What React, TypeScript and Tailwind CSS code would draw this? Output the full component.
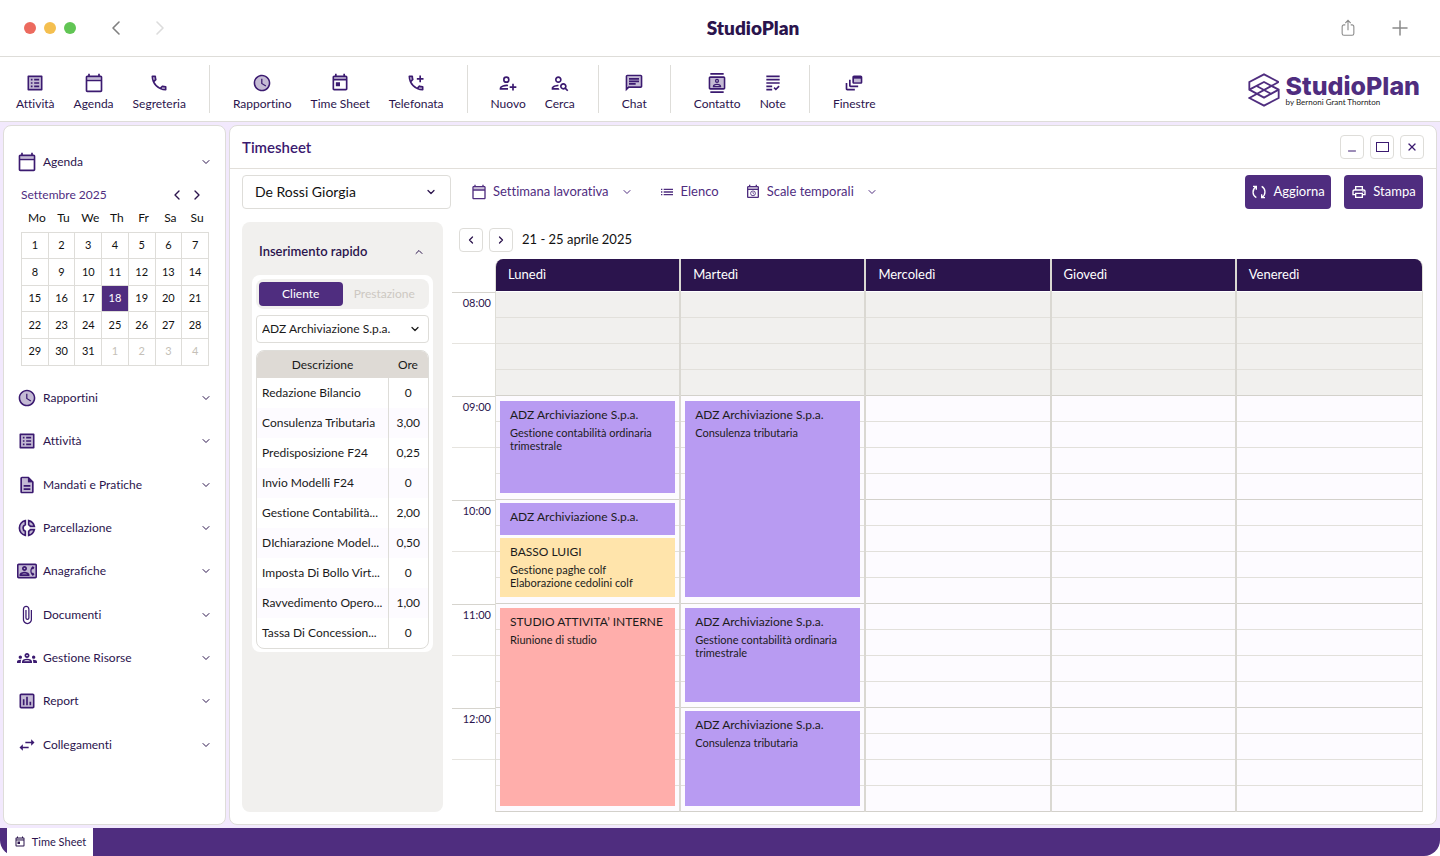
import React from 'react';
import { ChevronDown, ChevronLeft, ChevronRight, ChevronUp, Minus, Plus, X } from 'lucide-react';
import {
    MdAttachFile,
    MdGrading,
    MdList,
    MdListAlt,
    MdOutlineAddIcCall,
    MdOutlineCalendarToday,
    MdOutlineChat,
    MdOutlineContactPhone,
    MdOutlineContacts,
    MdOutlineDescription,
    MdOutlineDynamicFeed,
    MdOutlineGroups,
    MdOutlineInsertChart,
    MdOutlinePersonSearch,
    MdOutlinePhone,
    MdOutlinePrint,
    MdSchedule,
    MdSwapHoriz,
} from 'react-icons/md';

type IconProps = { className?: string };

// Wraps an outline icon and lays a translucent fill under it
const twoTone = (Icon: React.ElementType, tone: string): React.FC<IconProps> =>
    ({ className }) => (
        <svg viewBox="0 0 24 24" className={className} fill="currentColor" aria-hidden="true">
            <path d={tone} opacity="0.3" />
            <Icon width="24" height="24" size={24} />
        </svg>
    );

const TimeSheetIcon: React.FC<IconProps> = ({ className }) => (
    <svg viewBox="0 0 24 24" className={className} fill="currentColor" aria-hidden="true">
        <path d="M5 5h14v2H5z" opacity="0.3" />
        <path d="M19 3h-1V1h-2v2H8V1H6v2H5c-1.11 0-1.99.9-1.99 2L3 19c0 1.1.89 2 2 2h14c1.1 0 2-.9 2-2V5c0-1.1-.9-2-2-2zm0 16H5V9h14v10zm0-12H5V5h14v2zM7 11h5v5H7z" />
    </svg>
);

const TimeScaleIcon: React.FC<IconProps> = ({ className }) => (
    <svg viewBox="0 0 24 24" className={className} fill="currentColor" aria-hidden="true">
        <path d="M5 5h14v2H5z" opacity="0.3" />
        <path d="M19 3h-1V1h-2v2H8V1H6v2H5c-1.1 0-2 .9-2 2v14c0 1.1.9 2 2 2h14c1.1 0 2-.9 2-2V5c0-1.1-.9-2-2-2zm0 16H5V9h14v10zm0-12H5V5h14v2z" />
        <circle cx="12" cy="14" r="3.6" fill="none" stroke="currentColor" strokeWidth="1.3" />
        <path d="M12 12v2l1.4 1" fill="none" stroke="currentColor" strokeWidth="1.1" />
    </svg>
);

const PersonPlusIcon: React.FC<IconProps> = ({ className }) => (
    <svg viewBox="0 0 24 24" className={className} fill="none" stroke="currentColor" strokeWidth="2" aria-hidden="true">
        <circle cx="10" cy="8" r="3" />
        <path d="M12 15c-3.5-.5-9 1-9 3v1h9M18 13v8M14 17h8" />
    </svg>
);

const RefreshIcon: React.FC<IconProps> = ({ className }) => (
    <svg viewBox="0 0 24 24" className={className} fill="none" stroke="currentColor" strokeWidth="2" aria-hidden="true">
        <path d="M8 20.500C1.500 17 1.500 8 7.500 4M3 3.500h5v5" />
        <path d="M16 3.500C22.500 7 22.500 16 16.500 20M21 20.500h-5v-5" />
    </svg>
);

const DonutIcon: React.FC<IconProps> = ({ className }) => (
    <svg viewBox="0 0 24 24" className={className} fill="none" stroke="currentColor" strokeWidth="2" aria-hidden="true">
        <path d="M10 3.200a9 9 0 0 0 0 17.600v-4.800a4.300 4.300 0 0 1 0-8z" fill="currentColor" fillOpacity="0.3" />
        <path d="M14 3.200v4.800a4.300 4.300 0 0 1 2 2h4.800A9 9 0 0 0 14 3.200z" fill="currentColor" fillOpacity="0.3" />
        <path d="M14 20.800v-4.800a4.300 4.300 0 0 0 2-2h4.800A9 9 0 0 1 14 20.800z" fill="currentColor" fillOpacity="0.3" />
    </svg>
);

const ListAltIcon = twoTone(MdListAlt, 'M5 5h14v14H5z');
const AgendaIcon = twoTone(MdOutlineCalendarToday, 'M4 5h16v3H4z');
const PhoneIcon = twoTone(MdOutlinePhone, 'M5 5h2.500v4L6 9zM15 16h4v3h-2z');
const PhonePlusIcon = twoTone(MdOutlineAddIcCall, 'M5 5h2.500v4L6 9zM15 16h4v3h-2z');
const ClockIcon = twoTone(MdSchedule, 'M12 4a8 8 0 1 0 0 16 8 8 0 0 0 0-16z');
const ChatIcon = twoTone(MdOutlineChat, 'M4 4h16v12H4z');
const ContactsIcon = twoTone(MdOutlineContacts, 'M4 6h16v12H4z');
const WindowsIcon = twoTone(MdOutlineDynamicFeed, 'M12 7h8v4h-8z');
const DocIcon = twoTone(MdOutlineDescription, 'M6 4h7v5h5v11H6z');
const ContactPhoneIcon = twoTone(MdOutlineContactPhone, 'M2 5h20v14H2z');
const GroupsIcon = twoTone(MdOutlineGroups, 'M8 16h8v1H8z');
const ReportIcon = twoTone(MdOutlineInsertChart, 'M5 5h14v14H5z');

const toolbar = [
    [
        { label: 'Attività', icon: ListAltIcon },
        { label: 'Agenda', icon: AgendaIcon },
        { label: 'Segreteria', icon: PhoneIcon },
    ],
    [
        { label: 'Rapportino', icon: ClockIcon },
        { label: 'Time Sheet', icon: TimeSheetIcon },
        { label: 'Telefonata', icon: PhonePlusIcon },
    ],
    [
        { label: 'Nuovo', icon: PersonPlusIcon },
        { label: 'Cerca', icon: MdOutlinePersonSearch },
    ],
    [{ label: 'Chat', icon: ChatIcon }],
    [
        { label: 'Contatto', icon: ContactsIcon },
        { label: 'Note', icon: MdGrading },
    ],
    [{ label: 'Finestre', icon: WindowsIcon }],
];

const sections = [
    { label: 'Rapportini', icon: ClockIcon },
    { label: 'Attività', icon: ListAltIcon },
    { label: 'Mandati e Pratiche', icon: DocIcon },
    { label: 'Parcellazione', icon: DonutIcon },
    { label: 'Anagrafiche', icon: ContactPhoneIcon },
    { label: 'Documenti', icon: MdAttachFile },
    { label: 'Gestione Risorse', icon: GroupsIcon },
    { label: 'Report', icon: ReportIcon },
    { label: 'Collegamenti', icon: MdSwapHoriz },
];

const weekdays = ['Mo', 'Tu', 'We', 'Th', 'Fr', 'Sa', 'Su'];
const weeks = [
    [1, 2, 3, 4, 5, 6, 7],
    [8, 9, 10, 11, 12, 13, 14],
    [15, 16, 17, 18, 19, 20, 21],
    [22, 23, 24, 25, 26, 27, 28],
    [29, 30, 31, 1, 2, 3, 4],
];

const services = [
    ['Redazione Bilancio', '0'],
    ['Consulenza Tributaria', '3,00'],
    ['Predisposizione F24', '0,25'],
    ['Invio Modelli F24', '0'],
    ['Gestione Contabilità...', '2,00'],
    ['DIchiarazione Model...', '0,50'],
    ['Imposta Di Bollo Virt...', '0'],
    ['Ravvedimento Opero...', '1,00'],
    ['Tassa Di Concession...', '0'],
];

const hours = ['08:00', '09:00', '10:00', '11:00', '12:00'];

type CalendarEvent = { top: number; height: number; color: string; title: string; lines: string[] };

const purple = 'bg-[#b89bf2]';
const yellow = 'bg-[#ffe4ab]';
const red = 'bg-[#ffaeab]';

// top and height are in pixels: one hour is 104px
const days: { name: string; events: CalendarEvent[] }[] = [
    {
        name: 'Lunedì',
        events: [
            { top: 109, height: 92, color: purple, title: 'ADZ Archiviazione S.p.a.', lines: ['Gestione contabilità ordinaria', 'trimestrale'] },
            { top: 211, height: 32, color: purple, title: 'ADZ Archiviazione S.p.a.', lines: [] },
            { top: 246, height: 59, color: yellow, title: 'BASSO LUIGI', lines: ['Gestione paghe colf', 'Elaborazione cedolini colf'] },
            { top: 316, height: 198, color: red, title: 'STUDIO ATTIVITA’ INTERNE', lines: ['Riunione di studio'] },
        ],
    },
    {
        name: 'Martedì',
        events: [
            { top: 109, height: 196, color: purple, title: 'ADZ Archiviazione S.p.a.', lines: ['Consulenza tributaria'] },
            { top: 316, height: 94, color: purple, title: 'ADZ Archiviazione S.p.a.', lines: ['Gestione contabilità ordinaria', 'trimestrale'] },
            { top: 419, height: 95, color: purple, title: 'ADZ Archiviazione S.p.a.', lines: ['Consulenza tributaria'] },
        ],
    },
    { name: 'Mercoledì', events: [] },
    { name: 'Giovedì', events: [] },
    { name: 'Veneredì', events: [] },
];

const Logo: React.FC = () => (
    <div className="flex items-center gap-[6px] pt-[2px]">
        <svg viewBox="0 0 96 102" className="h-[34px] w-8" fill="none" stroke="#4f2d7f" strokeWidth="5.500" aria-hidden="true">
            <path d="M92 27 48 4 4 27v23l44 24 44-24" />
            <path d="M92 27 4 75l44 23 44-23V50L48 27 4 50" />
            <path d="M26 39 70 63" />
        </svg>
        <div>
            <div className="font-['Inter',sans-serif] text-[25px] leading-6 font-extrabold text-[#4f2d7f]">StudioPlan</div>
            <div className="text-[8px] leading-2 text-[#222]">by Bernoni Grant Thornton</div>
        </div>
    </div>
);

const TitleBar: React.FC = () => (
    <header className="grid h-[57px] grid-cols-[1fr_auto_1fr] items-center border-b border-[#deddd9] pr-7 pl-6">
        <div className="flex items-center gap-2">
            <span className="h-3 w-3 rounded-full bg-[#ec6a5e]" />
            <span className="h-3 w-3 rounded-full bg-[#f4bf4f]" />
            <span className="h-3 w-3 rounded-full bg-[#61c554]" />
            <button aria-label="Indietro" className="ml-5 text-[#808080]">
                <ChevronLeft className="h-6 w-6" strokeWidth={1.6} />
            </button>
            <button aria-label="Avanti" className="ml-3 text-[#dcdcdc]">
                <ChevronRight className="h-6 w-6" strokeWidth={1.6} />
            </button>
        </div>
        <h1 className="pl-[70px] text-[19px] font-extrabold text-[#2b144d]">StudioPlan</h1>
        <div className="flex items-center justify-end gap-8 text-[#8a8a8a]">
            <button aria-label="Condividi">
                <svg viewBox="0 0 16 20" className="h-[18px] w-4" fill="none" stroke="currentColor" strokeWidth="1.200">
                    <path d="M5 6.500H3.500a2 2 0 0 0-2 2V16a2 2 0 0 0 2 2h9a2 2 0 0 0 2-2V8.500a2 2 0 0 0-2-2H11M8 12.500V2M5 4.500 8 1.500l3 3" />
                </svg>
            </button>
            <button aria-label="Aggiungi">
                <Plus className="h-6 w-6" strokeWidth={1.5} />
            </button>
        </div>
    </header>
);

const Toolbar: React.FC = () => (
    <nav className="flex h-[65px] items-center border-b border-[#deddd9] pr-5">
        {toolbar.map((group, i) => (
            <div key={i} className="flex h-12 gap-[19px] border-r border-[#deddd9] px-[23px] first:pl-4 last-of-type:border-r-0">
                {group.map(({ label, icon: Icon }) => (
                    <button key={label} className="flex flex-col items-center justify-center gap-[3px] pt-[6px] text-xs leading-4 text-[#2b144d]">
                        <Icon className="h-5 w-5 text-[#3b1a70]" />
                        {label}
                    </button>
                ))}
            </div>
        ))}
        <a href="#" className="ml-auto">
            <Logo />
        </a>
    </nav>
);

const Sidebar: React.FC = () => (
    <aside className="w-[223px] shrink-0 rounded-lg border border-[#deddd9] bg-white text-xs text-[#2b144d]">
        <button className="mt-[26px] flex h-5 w-full items-center gap-[6px] px-[13px]">
            <AgendaIcon className="h-5 w-5 text-[#3b1a70]" />
            Agenda
            <ChevronDown className="ml-auto h-3 w-3" />
        </button>

        <div className="mt-[13px] flex h-5 items-center gap-1 pr-5 pl-[17px]">
            <span className="mr-auto text-[#4f2d7f]">Settembre 2025</span>
            <button aria-label="Mese precedente"><ChevronLeft className="h-4 w-4" /></button>
            <button aria-label="Mese successivo"><ChevronRight className="h-4 w-4" /></button>
        </div>

        <table className="ml-[17px] w-[188px] table-fixed border-collapse text-center text-[11px] text-[#111]">
            <thead>
                <tr className="h-[27px] text-xs">
                    {weekdays.map((d) => (
                        <th key={d} scope="col" className="p-0 pl-1 font-normal">{d}</th>
                    ))}
                </tr>
            </thead>
            <tbody className="h-[133px]">
                {weeks.map((week, w) => (
                    <tr key={w}>
                        {week.map((d) => (
                            <td
                                key={d}
                                className={
                                    d === 18
                                        ? 'border border-[#deddd9] bg-[#4f2d7f] p-0 text-white'
                                        : w === 4 && d < 8
                                          ? 'border border-[#deddd9] p-0 text-[#c5bfb8]'
                                          : 'border border-[#deddd9] p-0'
                                }
                            >
                                {d}
                            </td>
                        ))}
                    </tr>
                ))}
            </tbody>
        </table>

        <ul className="mt-[11px] grid h-[390px] auto-rows-fr">
            {sections.map(({ label, icon: Icon }) => (
                <li key={label}>
                    <button className="flex h-full w-full items-center gap-[6px] px-[13px]">
                        <Icon className="h-5 w-5 text-[#3b1a70]" />
                        {label}
                        <ChevronDown className="ml-auto h-3 w-3" />
                    </button>
                </li>
            ))}
        </ul>
    </aside>
);

const QuickEntry: React.FC = () => (
    <section className="w-[201px] shrink-0 rounded-lg bg-[#f1f0ee] px-[10px] pt-5">
        <button className="flex h-5 w-full items-center justify-between pr-2 pl-[7px] text-[13px] font-semibold text-[#2b144d]">
            Inserimento rapido
            <ChevronUp className="h-3 w-3" />
        </button>

        <div className="mt-[13px] rounded-lg bg-white px-1 pt-1 pb-[3px] text-xs text-[#1a1a1a]">
            <div className="flex h-[30px] rounded-lg bg-[#f1f0ee] p-[3px]">
                <button className="flex-1 rounded bg-[#4f2d7f] text-white">Cliente</button>
                <button className="flex-1 text-[#cdc8c2]">Prestazione</button>
            </div>

            <div className="relative mt-[6px]">
                <select
                    aria-label="Cliente"
                    className="h-7 w-full appearance-none rounded border border-[#deddd9] bg-white pl-[5px]"
                >
                    <option>ADZ Archiviazione S.p.a.</option>
                </select>
                <ChevronDown className="pointer-events-none absolute top-2 right-2 h-3 w-3" strokeWidth={2.5} />
            </div>

            <div className="mt-[7px] overflow-hidden rounded-lg border border-[#deddd9]">
                <table className="w-full table-fixed">
                    <thead>
                        <tr className="h-[27px] bg-[#dedad5]">
                            <th scope="col" className="p-0 font-normal">Descrizione</th>
                            <th scope="col" className="w-10 p-0 font-normal">Ore</th>
                        </tr>
                    </thead>
                    <tbody>
                        {services.map(([name, amount]) => (
                            <tr key={name} className="h-[30px] even:bg-[#fdfbff]">
                                <td className="border-r border-[#deddd9] p-0 pl-[5px] whitespace-nowrap">{name}</td>
                                <td className="p-0 text-center">{amount}</td>
                            </tr>
                        ))}
                    </tbody>
                </table>
            </div>
        </div>
    </section>
);

const Schedule: React.FC = () => (
    <section className="min-w-0 flex-1">
        <div className="mt-[6px] flex h-6 items-center gap-[6px] pl-[7px] text-[#2b144d]">
            <button aria-label="Settimana precedente" className="flex h-6 w-6 items-center justify-center rounded border border-[#deddd9]">
                <ChevronLeft className="h-3 w-3" strokeWidth={2.5} />
            </button>
            <button aria-label="Settimana successiva" className="flex h-6 w-6 items-center justify-center rounded border border-[#deddd9]">
                <ChevronRight className="h-3 w-3" strokeWidth={2.5} />
            </button>
            <span className="pl-[3px] text-[13px] text-[#111]">21 - 25 aprile 2025</span>
        </div>

        <div className="mt-[7px] flex">
            <div className="w-[43px] shrink-0 pt-[33px] text-right text-[11px] text-[#2b144d]">
                {hours.map((hour) => (
                    <div key={hour} className="h-[104px] border-t border-[#d6d4ce]">
                        <div className="h-[51px] border-b border-[#e6e4df] pt-1 pr-1 leading-3">{hour}</div>
                    </div>
                ))}
            </div>

            <div className="grid flex-1 grid-cols-5 overflow-hidden rounded-t-lg border-r border-l border-[#deddd6]">
                {days.map((day) => (
                    <div key={day.name} className="border-r-2 border-[#dad8d2] last:border-r-0">
                        <div className="flex h-8 items-center bg-[#2b144d] pl-3 text-[13px] text-white">{day.name}</div>
                        <div className="relative mt-px">
                            {hours.map((hour, h) => (
                                <div key={hour} className={h === 0 ? 'bg-[#f1f0ee]' : 'bg-[#fdfbff]'}>
                                    <div className="h-[26px] border-b border-[#e2e0db]" />
                                    <div className="h-[26px] border-b border-[#e2e0db]" />
                                    <div className="h-[26px] border-b border-[#e2e0db]" />
                                    <div className="h-[26px] border-b border-[#d3d1cb]" />
                                </div>
                            ))}
                            {day.events.map((event) => (
                                <article
                                    key={event.top}
                                    className={`absolute inset-x-1 px-[10px] pt-2 whitespace-nowrap text-[#1c1c1c] ${event.color}`}
                                    style={{ top: event.top, height: event.height }}
                                >
                                    <h3 className="text-xs leading-3">{event.title}</h3>
                                    <div className="mt-[5px] text-[11px] leading-[13px]">
                                        {event.lines.map((line) => (
                                            <p key={line}>{line}</p>
                                        ))}
                                    </div>
                                </article>
                            ))}
                        </div>
                    </div>
                ))}
            </div>
        </div>
    </section>
);

const TimesheetWindow: React.FC = () => (
    <main className="flex min-w-0 flex-1 flex-col rounded-lg border border-[#deddd9] bg-white">
        <div className="flex h-[43px] items-center gap-[6px] border-b border-[#e2dfda] px-3 text-[#3b1a70]">
            <h2 className="mr-auto text-[15px] font-semibold">Timesheet</h2>
            <button aria-label="Riduci" className="flex h-6 w-6 items-end justify-center rounded border border-[#deddd9] pb-px">
                <Minus className="h-3 w-3" />
            </button>
            <button aria-label="Ingrandisci" className="flex h-6 w-6 items-center justify-center rounded border border-[#deddd9]">
                <span className="h-[10px] w-[13px] border border-[#3b1a70]" />
            </button>
            <button aria-label="Chiudi" className="flex h-6 w-6 items-center justify-center rounded border border-[#deddd9]">
                <X className="h-3 w-3" strokeWidth={2.5} />
            </button>
        </div>

        <div className="mt-[6px] flex h-[34px] items-center pr-[13px] pl-3 text-[13px] text-[#4f2d7f]">
            <div className="relative w-[209px]">
                <select
                    aria-label="Utente"
                    className="h-[34px] w-full appearance-none rounded border border-[#deddd9] bg-white pl-3 text-sm text-[#111]"
                >
                    <option>De Rossi Giorgia</option>
                </select>
                <ChevronDown className="pointer-events-none absolute top-[11px] right-[14px] h-3 w-3 text-[#2b144d]" strokeWidth={2.5} />
            </div>
            <button className="ml-5 flex items-center gap-[6px]">
                <AgendaIcon className="h-4 w-4" />
                Settimana lavorativa
                <ChevronDown className="ml-[6px] h-3 w-3" />
            </button>
            <button className="ml-[26px] flex items-center gap-[6px]">
                <MdList className="h-4 w-4" />
                Elenco
            </button>
            <button className="ml-[26px] flex items-center gap-[6px]">
                <TimeScaleIcon className="h-4 w-4" />
                Scale temporali
                <ChevronDown className="ml-[6px] h-3 w-3" />
            </button>
            <button className="ml-auto flex h-[34px] w-[86px] items-center justify-center gap-[6px] rounded bg-[#4f2d7f] text-white">
                <RefreshIcon className="h-4 w-4" />
                Aggiorna
            </button>
            <button className="ml-[13px] flex h-[34px] w-[79px] items-center justify-center gap-[6px] rounded bg-[#4f2d7f] text-white">
                <MdOutlinePrint className="h-4 w-4" />
                Stampa
            </button>
        </div>

        <div className="flex flex-1 gap-[9px] pt-[13px] pr-[13px] pb-3 pl-3">
            <QuickEntry />
            <Schedule />
        </div>
    </main>
);

const App: React.FC = () => (
    <div className="flex min-h-screen flex-col bg-white font-['Lato',sans-serif] [font-variant-ligatures:none]">
        <TitleBar />
        <Toolbar />
        <div className="flex flex-1 gap-[3px] bg-[#f2e9fd] p-[3px]">
            <Sidebar />
            <TimesheetWindow />
        </div>
        <footer className="flex h-7 rounded-b-2xl bg-[#4f2d7f] pl-[7px]">
            <button className="flex w-[86px] items-center justify-center gap-[6px] bg-white text-[11px] text-[#2b144d]">
                <TimeSheetIcon className="h-3 w-3" />
                Time Sheet
            </button>
        </footer>
    </div>
);

export default App;
